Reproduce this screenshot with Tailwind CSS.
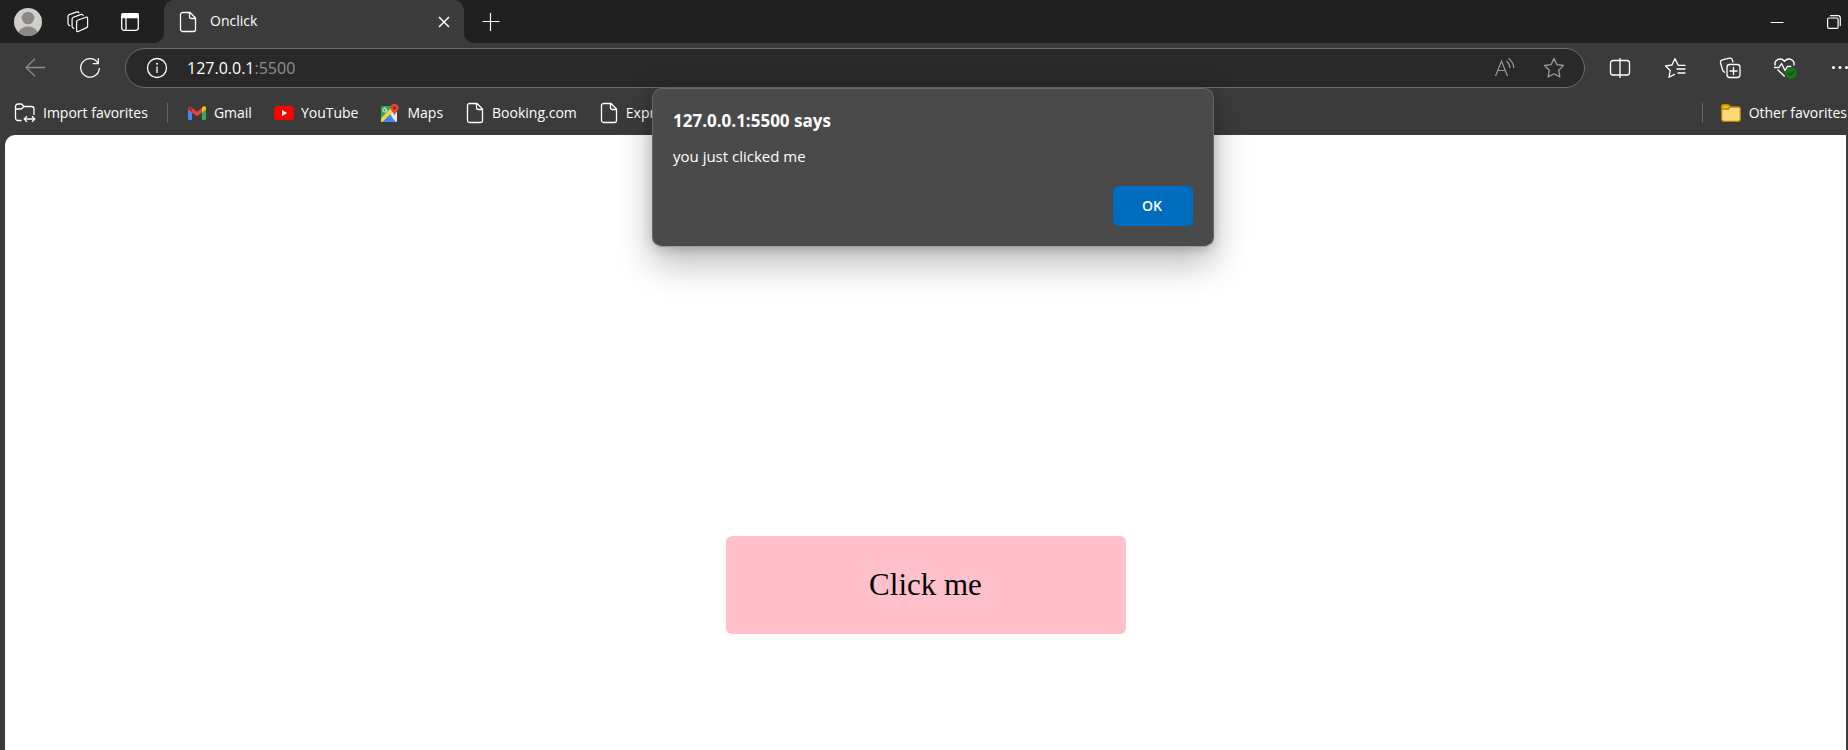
<!DOCTYPE html>
<html lang="en">
<head>
<meta charset="utf-8">
<title>Onclick</title>
<script src="https://cdn.jsdelivr.net/npm/@tailwindcss/browser@4"></script>
</head>
<body class="flex h-screen flex-col overflow-hidden bg-[#3b3b3b] font-['Open_Sans','Noto_Sans',sans-serif] text-sm text-white">
<svg class="hidden" aria-hidden="true">
  <symbol id="page" viewBox="0 0 20 22"><path d="M4.500 1.500h7.500l5.500 5.500v11.500a2 2 0 0 1-2 2h-11a2 2 0 0 1-2-2v-15a2 2 0 0 1 2-2zM11.500 1.500v4a2 2 0 0 0 2 2h4" fill="none" stroke="currentColor" stroke-width="1.300"/></symbol>
</svg>

<!-- Tab strip -->
<header class="flex h-[43px] shrink-0">
  <div class="flex w-[164px] shrink-0 items-center rounded-br-[10px] bg-[#202020] pl-[14px]">
    <button aria-label="Profile" class="size-7">
      <svg viewBox="0 0 28 28" class="size-7"><defs><clipPath id="round"><circle cx="14" cy="14" r="14"/></clipPath></defs><g clip-path="url(#round)"><rect width="28" height="28" fill="#d0cecb"/><circle cx="14" cy="10" r="6.300" fill="#8b8886"/><ellipse cx="14" cy="26.500" rx="9.800" ry="8" fill="#8b8886"/></g></svg>
    </button>
    <button aria-label="Workspaces" class="ml-[25px] size-[22px]">
      <svg viewBox="0 0 22 22" class="size-[22px]" fill="none" stroke="#fff" stroke-width="1.200" stroke-linejoin="round" stroke-linecap="round"><path d="M10.600 9.200L19 6.200q1.600-.4 1.600 1.200v7.800q0 1-1 1.400L11.200 20.500q-1.600.5-1.600-1V10.600q0-1 1-1.400zM6.800 17.400q-1.700-.3-1.700-1.800V8q0-1.200 1.200-1.700l7.900-2.900q1.500-.4 1.900 1M2.800 14.600Q1 14.300 1 12.800V5.300q0-1.200 1.200-1.700l7.800-2.700q1.400-.4 1.900.9"/></svg>
    </button>
    <button aria-label="Tab actions menu" class="ml-[31px] size-5">
      <svg viewBox="0 0 20 20" class="size-5" fill="none" stroke="#fff" stroke-width="1.300"><rect x="1.700" y="1.700" width="16.600" height="16.600" rx="2.500"/><path d="M2 2h16v3.500H2z" fill="#fff"/><path d="M6 6v12"/></svg>
    </button>
  </div>
  <div class="w-[300px] shrink-0 bg-[#202020]">
    <div class="flex h-full items-center rounded-t-[10px] bg-[#3b3b3b] pr-[14px] pl-[14px]">
      <svg class="h-[22px] w-5"><use href="#page"/></svg>
      <span class="ml-3 flex-1 pb-0.5">Onclick</span>
      <button aria-label="Close tab" class="size-3"><svg viewBox="0 0 12 12" class="size-3"><path d="M1 1l10 10M11 1L1 11" stroke="#fff" stroke-width="1.500"/></svg></button>
    </div>
  </div>
  <div class="flex flex-1 items-center rounded-bl-[10px] bg-[#202020] pr-[7px] pl-[18px]">
    <button aria-label="New tab" class="size-[18px]"><svg viewBox="0 0 18 18" class="size-[18px]"><path d="M.500 8.500h17M8.500 0v18" stroke="#fff" stroke-width="1.200"/></svg></button>
    <button aria-label="Minimize" class="ml-auto size-[14px]"><svg viewBox="0 0 14 14" class="size-[14px]"><path d="M.500 7.500h13" stroke="#fff"/></svg></button>
    <button aria-label="Restore" class="ml-[43px] size-[14px]"><svg viewBox="0 0 14 14" class="size-[14px]" fill="none" stroke="#fff" stroke-width="1.200"><rect x=".600" y="3" width="10.500" height="10.400" rx="1.500"/><path d="M3 .700h8q2.300 0 2.300 2.300v8"/></svg></button>
  </div>
</header>

<!-- Address bar and toolbar -->
<div class="flex h-[50px] shrink-0 items-center">
  <button aria-label="Back" class="ml-[25px] size-5 shrink-0"><svg viewBox="0 0 20 20" class="size-5" fill="none" stroke="#8a8a8a" stroke-width="1.300"><path d="M20 9.500H1M10 .800L1 9.500l9 8.700"/></svg></button>
  <button aria-label="Refresh" class="ml-[34px] size-[22px] shrink-0"><svg viewBox="0 0 22 22" class="size-[22px]" fill="none" stroke="#fff" stroke-width="1.300"><path d="M18.800 5.800A9.300 9.300 0 1 0 20.300 11M19.300 1v5.700h-5.600"/></svg></button>
  <div class="ml-6 flex h-10 flex-1 items-center rounded-full border border-[#6b6b6b] bg-[#292929] pr-[19px] pl-5">
    <button aria-label="View site information" class="size-[22px]"><svg viewBox="0 0 22 22" class="size-[22px]" fill="none" stroke="#fff" stroke-width="1.300"><circle cx="11" cy="11" r="9.500"/><path d="M11 9.500v6.500"/><circle cx="11" cy="6.800" r="1" fill="#fff" stroke="none"/></svg></button>
    <div class="ml-[19px] flex-1 text-base" role="textbox" aria-label="Address">127.0.0.1<span class="text-[#8f8f8f]">:5500</span></div>
    <button aria-label="Read aloud" class="size-[22px]"><svg viewBox="0 0 22 22" class="size-[22px]" fill="none" stroke="#999" stroke-width="1.200"><path d="M2.500 19L8.500 4l6 15M4.800 13.500h7.500M13.500 4q3.200 2.500 3.500 7M15.500 1.500q5 3.500 5.300 9.500"/></svg></button>
    <button aria-label="Add to favorites" class="ml-7 size-[22px]"><svg viewBox="0 0 22 22" class="size-[22px]" fill="none" stroke="#999" stroke-width="1.300" stroke-linejoin="round"><path d="M11 1.500l2.900 6.100 6.600.900-4.800 4.700 1.200 6.700-5.900-3.200-5.900 3.200 1.200-6.700L1.500 8.500l6.600-.9z"/></svg></button>
  </div>
  <nav aria-label="Browser tools" class="-mr-[19px] ml-[7px] flex shrink-0">
    <button aria-label="Split screen" class="flex w-[55px] justify-center"><svg viewBox="0 0 22 22" class="size-[22px]" fill="none" stroke="#fff" stroke-width="1.300"><path d="M11 3.500H4a2.500 2.500 0 0 0-2.500 2.500v9.500A2.500 2.500 0 0 0 4 18h7M11 3.500h7a2.500 2.500 0 0 1 2.500 2.500v9.500A2.500 2.500 0 0 1 18 18h-7M11 1v20"/></svg></button>
    <button aria-label="Favorites" class="flex w-[55px] justify-center"><svg viewBox="0 0 22 22" class="size-[22px]" fill="none" stroke="#fff" stroke-width="1.300" stroke-linejoin="round" stroke-linecap="round"><path d="M21 8.300h-6.800l-3.300-6.700L8 8l-6.500 1 4.700 4.500L5 20.300l5.500-2.900M13 12h8M14 16h7"/></svg></button>
    <button aria-label="Collections" class="flex w-[55px] justify-center"><svg viewBox="0 0 22 22" class="size-[22px]" fill="none" stroke="#fff" stroke-width="1.300" stroke-linecap="round"><rect x="8" y="7.500" width="13" height="13" rx="2.700"/><path d="M14.500 10.500v7M11 14h7M5.700 15.200q-1.700-.4-2-2L1.500 6Q1 3.600 3.300 2.900l7-1.700q2.300-.5 3 1.600l.6 2"/></svg></button>
    <button aria-label="Browser essentials" class="flex w-[55px] justify-center"><svg viewBox="0 0 24 22" class="h-[22px] w-6" fill="none" stroke="#fff" stroke-width="1.400" stroke-linejoin="round"><path d="M2.300 8.500C.500 3.500 7-.500 11.500 4.200 16-.500 22.500 3.500 20.800 8.500M1 10.500h5l2.500-4 3.500 7 2.300-4h4M4.500 12.500l7.200 7"/><circle cx="18" cy="16" r="5.700" fill="#107c10" stroke="none"/><path d="M15.300 16l2 2 3.600-3.700" stroke="#263b26"/></svg></button>
    <button aria-label="Settings and more" class="flex w-[55px] justify-center"><svg viewBox="0 0 20 22" class="h-[22px] w-5" fill="#fff"><circle cx="3.500" cy="10.500" r="1.500"/><circle cx="10" cy="10.500" r="1.500"/><circle cx="16.500" cy="10.500" r="1.500"/></svg></button>
  </nav>
</div>

<!-- Favorites bar -->
<nav aria-label="Favorites bar" class="flex h-[42px] shrink-0 items-center gap-[22px] whitespace-nowrap pb-0.5 pl-[14px]">
  <a href="#" class="flex items-center gap-[7px]"><svg viewBox="0 0 22 20" class="h-5 w-[22px]" fill="none" stroke="#fff" stroke-width="1.300" stroke-linejoin="round"><path d="M7.500 17.500H4A2.500 2.500 0 0 1 1.500 15V3.500A2.500 2.500 0 0 1 4 1h3.500l2.500 2.500h7.500A2.500 2.500 0 0 1 20 6v6M1.500 6h5q1 0 1.700-.8L10 3.500M10.500 16h10M13 13.200L10.200 16l2.800 2.800M18 13.200l2.800 2.800-2.800 2.800"/></svg>Import favorites</a>
  <span class="-mx-[3px] h-5 w-px bg-[#666]"></span>
  <a href="#" class="flex items-center gap-[7px]"><svg viewBox="0 0 20 16" class="h-4 w-5"><path d="M1 3v10.500Q1 15 2.500 15H5V6z" fill="#4285f4"/><path d="M19 3v10.500q0 1.500-1.500 1.500H15V6z" fill="#34a853"/><path d="M5 7.500V3l5 3.800L15 3v4.500l-5 3.800z" fill="#ea4335"/><path d="M1 3q0-2 1.700-2Q3.600 1 5 2.500v5l-4-3z" fill="#c5221f"/><path d="M19 3q0-2-1.700-2-.9 0-2.300 1.500v5l4-3z" fill="#fbbc04"/></svg>Gmail</a>
  <a href="#" class="flex items-center gap-[7px]"><svg viewBox="0 0 20 14" class="h-[14px] w-5"><rect width="20" height="14" rx="3.500" fill="#f00"/><path d="M8 4l5.200 3L8 10z" fill="#fff"/></svg>YouTube</a>
  <a href="#" class="flex items-center gap-[7px]"><svg viewBox="0 0 20 20" class="size-5"><rect x="1" y="3" width="16" height="16" rx="1.500" fill="#34a853"/><path d="M10 10.500l2-2 5 1v9l-2 .5z" fill="#e8eaed"/><path d="M1 15.500L12 4l2.500 3L2.500 19H1z" fill="#fbd14b"/><path d="M9.500 12l-7 7h13.500z" fill="#4285f4"/><path d="M6.500 5.700A2 2 0 1 0 7 7H5" fill="none" stroke="#fff"/><path d="M14.500 1a4 4 0 0 1 4 4c0 3-3.500 4-4 8-.5-4-4-5-4-8a4 4 0 0 1 4-4z" fill="#ea4335"/><circle cx="14.500" cy="5" r="1.400" fill="#8c1d18"/></svg>Maps</a>
  <a href="#" class="flex items-center gap-[7px]"><svg class="h-[22px] w-5"><use href="#page"/></svg>Booking.com</a>
  <a href="#" class="flex items-center gap-[7px]"><svg class="h-[22px] w-5"><use href="#page"/></svg>Expr</a>
  <span class="ml-auto h-5 w-px bg-[#666]"></span>
  <a href="#" class="-ml-1 flex items-center gap-2 pr-px"><svg viewBox="0 0 20 18" class="h-[18px] w-5" stroke="#b8860b" stroke-width="1.300"><path d="M.700 3Q.700.700 3 .700h4L9.500 3H17q2.300 0 2.300 2v10q0 2.300-2.300 2.300H3Q.700 17.300.700 15z" fill="#ffd977"/><path d="M.700 5V3Q.700.700 3 .700h4L9.300 2.700 7.500 5z" fill="#f5b800"/></svg>Other favorites</a>
</nav>

<!-- Page -->
<main class="mr-0.5 ml-[5px] flex flex-1 items-start justify-center rounded-tl-[10px] bg-white pt-[401px]">
  <button class="h-[98px] w-[400px] rounded-md bg-[#ffc0cb] font-['Liberation_Serif',serif] text-[31px] text-black">Click me</button>
</main>

<!-- Alert -->
<div role="alertdialog" aria-labelledby="alert-title" aria-describedby="alert-text" class="absolute top-[88px] left-[652px] flex w-[562px] flex-col rounded-[10px] border border-[#686868] border-b-[#a0a0a0] bg-[#4a4a4a] px-5 py-5 shadow-[0_16px_36px_rgba(0,0,0,0.28),0_2px_12px_rgba(0,0,0,0.18)]">
  <h1 id="alert-title" class="text-[17px] leading-6 font-bold">127.0.0.1:5500 says</h1>
  <p id="alert-text" class="mt-[11px] text-[15px] leading-6">you just clicked me</p>
  <button class="mt-[18px] h-10 w-20 self-end rounded-[5px] bg-[#006cbe] pr-0.5 text-sm font-semibold">OK</button>
</div>
</body>
</html>
